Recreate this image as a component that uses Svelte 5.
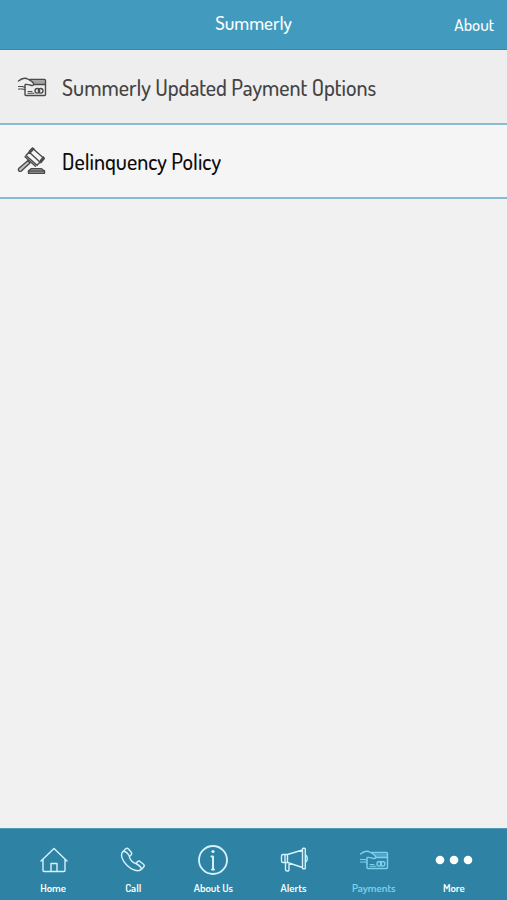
<script>
  const rows = [
    { label: 'Summerly Updated Payment Options', icon: 'card', selected: true },
    { label: 'Delinquency Policy', icon: 'gavel', selected: false }
  ];
  const tabs = [
    { label: 'Home', icon: 'home' },
    { label: 'Call', icon: 'phone' },
    { label: 'About Us', icon: 'info' },
    { label: 'Alerts', icon: 'horn' },
    { label: 'Payments', icon: 'card', active: true },
    { label: 'More', icon: 'dots' }
  ];
</script>

{#snippet glyph(name)}
  {#if name === 'dots'}
    <svg class="wide" viewBox="0 0 40 32" aria-hidden="true">
      <g fill="currentColor" stroke="none">
        <circle cx="6" cy="16" r="4.3" /><circle cx="20" cy="16" r="4.3" /><circle cx="34" cy="16" r="4.3" />
      </g>
    </svg>
  {:else}
    <svg viewBox="0 0 32 32" aria-hidden="true">
      {#if name === 'home'}
        <path d="M6 15.500v11q0 1 1 1h20q1 0 1-1v-11M4 17 17 4.500 30 17M14 27.500v-8h6v8" />
      {:else if name === 'phone'}
        <path d="M8.500 5q1.500-1.500 3 0l2.500 3q1.500 1.500 0 3l-1.700 1.700c.5 3 3.500 6 6.500 6.800l1.600-1.700q1.500-1.500 3 0l3.100 2.500q1.500 1.500 0 3l-1.600 1.700c-3.500 3.500-10 1.200-15-3.800S3 10.500 6 7.500zM7 7.500q3 0 5.500 5M18.800 19.500q5 2.500 5.700 5.500" />
      {:else if name === 'info'}
        <circle cx="16" cy="16" r="14" stroke-width="1.8" />
        <path d="M16 12.500v13M14.500 12.500H16M15 25.500h2" stroke-width="2" />
        <circle cx="16" cy="7.500" r="1.600" fill="currentColor" stroke="none" />
      {:else if name === 'horn'}
        <path d="M5 10.500h4.500v8H5q-1.500 0-1.500-1.500v-5q0-1.500 1.500-1.500zM9.500 10.500 24.500 6v17.500l-15-5zM24.500 5q0-.8.800-.8h1.200q.8 0 .8.800v19q0 .8-.8.8h-1.200q-.8 0-.8-.8zM27.300 10.500q2 1.500 2 4t-2 4M7.500 18.500v7q0 1.500 1.800 1.500t1.700-1.500v-6.500M7 10.500v8" />
      {:else if name === 'card'}
        <path d="M15.500 9.500H29.500v4H18.500z" fill="currentColor" fill-opacity=".45" stroke="none" />
        <path d="M13.500 8.500H28.500q1 0 1 1V23.500q0 1-1 1H10q-1 0-1-1V14M18.500 13.500h11" />
        <path d="M2.500 10C6 6.800 10 6.800 12.500 8.500c2 1.200 4 2 5 3.800.8 1.500-.3 2.400-1.800 2.200C13 14 12 13 9.500 13.500" />
        <path d="M2.500 15.500h4l2.500 1M2.500 18h4l2.500.8M12 20.500h4M12 22.300h6" stroke-width="1.100" />
        <circle cx="21.300" cy="19.800" r="2.300" /><circle cx="24.700" cy="19.800" r="2.300" />
      {:else if name === 'gavel'}
        <g fill="currentColor" fill-opacity=".3">
          <path d="m13.500 6 3-3 1.500.8-3.800 4zM24.500 15.500l2.800-3.500 1 1.500-3.300 4zM12 15.500l-9.300 8q-.8 1.500.2 2.400t2.400.2L14 18zM15 23.800h10.500l3 2.200v2.300H12.500V26z" />
        </g>
        <path d="m10 10.500 6.500-7.300 11.300 10-6.800 7zM9 11.800l10.500 9.500M13 7l11.500 10.500M12.500 26h16" />
      {/if}
    </svg>
  {/if}
{/snippet}

<div class="app">
  <header>
    <span></span>
    <h1>Summerly</h1>
    <a href="#about">About</a>
  </header>
  <main>
    <ul>
      {#each rows as row}
        <li>
          <a href="#{row.icon}" class="row" class:selected={row.selected}>
            {@render glyph(row.icon)}
            <span>{row.label}</span>
          </a>
        </li>
      {/each}
    </ul>
  </main>
  <nav>
    {#each tabs as tab}
      <button type="button" class:active={tab.active}>
        {@render glyph(tab.icon)}
        <span>{tab.label}</span>
      </button>
    {/each}
  </nav>
</div>

<style>
  :global(body) {
    margin: 0;
  }
  .app {
    min-height: 100vh;
    display: flex;
    flex-direction: column;
    background: #f1f1f1;
    font-family: Dosis, 'Liberation Sans Narrow', Lato, sans-serif;
    font-weight: 500;
  }
  header {
    box-sizing: border-box;
    height: 50px;
    padding: 0 13px;
    display: grid;
    grid-template-columns: 1fr auto 1fr;
    align-items: center;
    background: #429bbe;
    border-bottom: 1px solid #3689ae;
    color: #fff;
  }
  h1 {
    margin: 0;
    padding-bottom: 4px;
    font-size: 19px;
    line-height: 24px;
    font-weight: 500;
  }
  header a {
    justify-self: end;
    color: inherit;
    font-size: 17px;
    line-height: 24px;
    text-decoration: none;
  }
  main {
    flex: 1;
  }
  ul {
    list-style: none;
    margin: 0;
    padding: 0;
    border-top: 1px solid #eee;
  }
  .row {
    display: flex;
    align-items: center;
    gap: 14px;
    height: 72px;
    padding: 0 16px;
    border-bottom: 2px solid #8bbbd3;
    background: #f5f5f5;
    color: #0c0c0c;
    font-size: 22px;
    line-height: 28px;
    text-decoration: none;
  }
  .row.selected {
    background: #eee;
    color: #444;
  }
  svg {
    width: 32px;
    height: 32px;
    flex: none;
    fill: none;
    stroke: currentColor;
    stroke-width: 1.4;
    stroke-linecap: round;
    stroke-linejoin: round;
  }
  .row svg {
    color: #4a4a4a;
  }
  svg.wide {
    width: 40px;
  }
  nav {
    box-sizing: border-box;
    height: 72px;
    padding: 0 13px;
    display: grid;
    grid-template-columns: repeat(6, 1fr);
    background: #2e83a4;
    border-top: 1px solid #4f9ab7;
  }
  button {
    display: flex;
    flex-direction: column;
    align-items: center;
    gap: 4px;
    padding: 15px 0 0;
    border: 0;
    background: none;
    color: #fff;
    font-family: inherit;
    font-size: 11px;
    line-height: 16px;
    font-weight: 600;
  }
  button svg {
    color: #d5f2fc;
  }
  button svg.wide {
    color: #fff;
  }
  button.active,
  button.active svg {
    color: #7dd0ee;
  }
</style>
